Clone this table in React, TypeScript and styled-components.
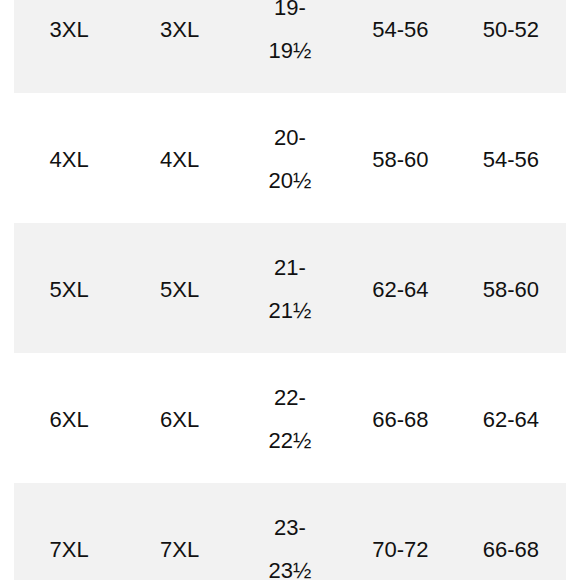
import React from 'react';
import styled, {createGlobalStyle} from 'styled-components';

const GlobalStyle = createGlobalStyle`
  html, body {
    margin: 0;
    padding: 0;
    background: #ffffff;
    overflow: hidden;
  }
  body {
    font-family: "Liberation Sans", Arial, sans-serif;
    color: #111111;
  }
`;

const rowHeight = 130;

const Page = styled.div`
  padding: 0 14px;
  // the screenshot is taken part way down the table
  margin-top: -37px;
`;

const Table = styled.div`
  display: flex;
  flex-direction: column;
`;

const Row = styled.div<{$shaded: boolean}>`
  display: grid;
  grid-template-columns: repeat(5, 1fr);
  height: ${rowHeight}px;
  background-color: ${({$shaded}) => ($shaded ? '#f2f2f2' : '#ffffff')};
`;

const Cell = styled.div`
  display: flex;
  flex-direction: column;
  align-items: center;
  justify-content: center;
  padding-top: 2px;
  font-size: 22px;
  line-height: 43px;
  text-align: center;
`;

interface SizeRow {
  size: string;
  alt: string;
  neck: [string, string];
  chest: string;
  waist: string;
}

const rows: SizeRow[] = [
  {size: '3XL', alt: '3XL', neck: ['19-', '19½'], chest: '54-56', waist: '50-52'},
  {size: '4XL', alt: '4XL', neck: ['20-', '20½'], chest: '58-60', waist: '54-56'},
  {size: '5XL', alt: '5XL', neck: ['21-', '21½'], chest: '62-64', waist: '58-60'},
  {size: '6XL', alt: '6XL', neck: ['22-', '22½'], chest: '66-68', waist: '62-64'},
  {size: '7XL', alt: '7XL', neck: ['23-', '23½'], chest: '70-72', waist: '66-68'},
];

export default function App() {
  return (
    <Page>
      <GlobalStyle />
      <Table>
        {rows.map((r, i) => (
          <Row key={r.size} $shaded={i % 2 === 0}>
            <Cell>{r.size}</Cell>
            <Cell>{r.alt}</Cell>
            <Cell>
              <span>{r.neck[0]}</span>
              <span>{r.neck[1]}</span>
            </Cell>
            <Cell>{r.chest}</Cell>
            <Cell>{r.waist}</Cell>
          </Row>
        ))}
      </Table>
    </Page>
  );
}
